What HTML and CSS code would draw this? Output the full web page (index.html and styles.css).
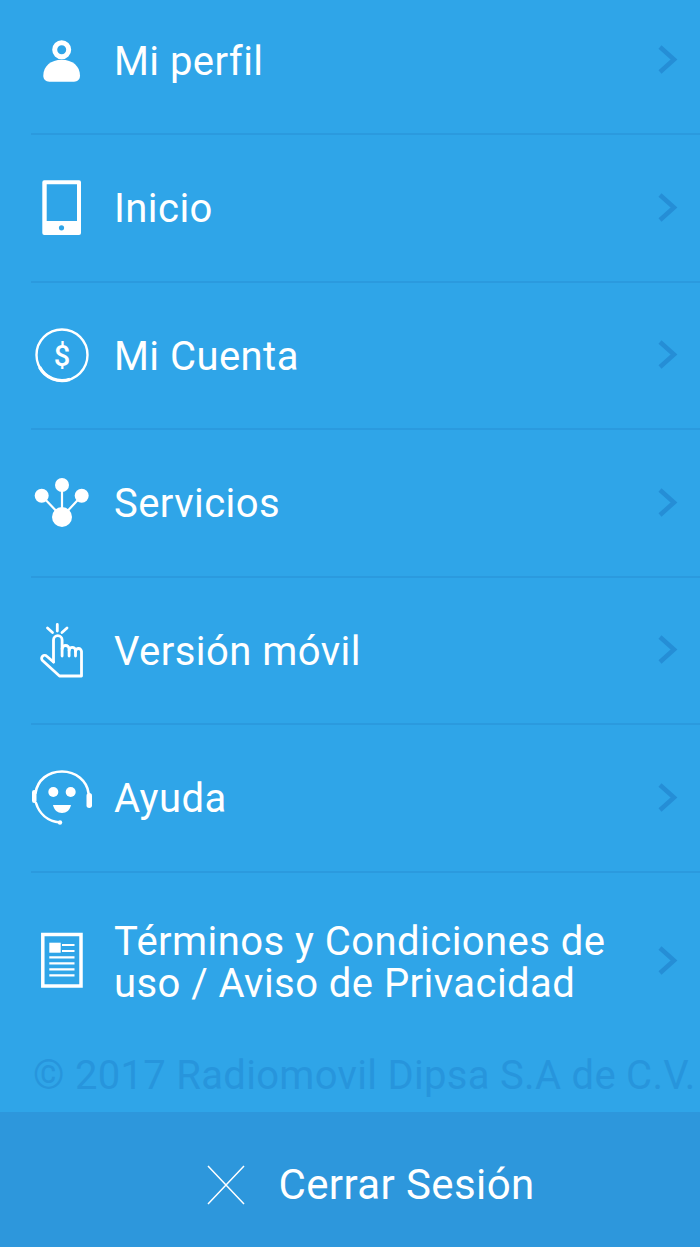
FILE: index.html
```html
<!DOCTYPE html>
<html lang="es">

<head>
  <meta charset="UTF-8">
  <meta name="viewport" content="width=device-width, initial-scale=1.0">
  <title>Menú</title>
  <link rel="stylesheet" href="styles.css">
</head>

<body>
  <nav class="menu">
    <a class="menu-item">
      <svg class="menu-icon" viewBox="30 29 64 64">
        <circle cx="61.7" cy="50.7" r="7" fill="none" stroke="#fff" stroke-width="5"/>
        <path d="M43.3 76.5C43.3 67 51 60.7 61.7 60.7S80 67 80 76.5C80 80.5 77.5 82.7 74 82.7H49.3C45.8 82.7 43.3 80.5 43.3 76.5Z" fill="#fff"/>
      </svg>
      <span class="menu-label">Mi perfil</span>
      <svg class="menu-arrow" viewBox="0 0 24 32"><path d="M3 3L17 15.5L3 28"/></svg>
    </a>
    <a class="menu-item">
      <svg class="menu-icon" viewBox="30 176 64 64">
        <path fill-rule="evenodd" d="M44.3 180.3H79a2 2 0 0 1 2 2V233a2 2 0 0 1-2 2H44.3a2 2 0 0 1-2-2V182.3a2 2 0 0 1 2-2ZM46.7 184.3V221H77V184.3Z" fill="#fff"/>
        <circle cx="61.5" cy="227.8" r="2.6" fill="#2fa5e8"/>
      </svg>
      <span class="menu-label">Inicio</span>
      <svg class="menu-arrow" viewBox="0 0 24 32"><path d="M3 3L17 15.5L3 28"/></svg>
    </a>
    <a class="menu-item">
      <svg class="menu-icon" viewBox="30 323 64 64">
        <circle cx="62" cy="355" r="25.5" fill="none" stroke="#fff" stroke-width="2.4"/>
        <path d="M39.5 367A25.5 25.5 0 0 0 70 379.3" fill="none" stroke="#fff" stroke-width="3.4"/>
        <text class="dollar-sign" x="62" y="366">$</text>
      </svg>
      <span class="menu-label">Mi Cuenta</span>
      <svg class="menu-arrow" viewBox="0 0 24 32"><path d="M3 3L17 15.5L3 28"/></svg>
    </a>
    <a class="menu-item">
      <svg class="menu-icon" viewBox="30 471 64 64">
        <path d="M62 485V517M41.7 495.7L62 517M81.7 495.7L62 517" fill="none" stroke="#fff" stroke-width="2.2"/>
        <circle cx="62" cy="517" r="10" fill="#fff"/>
        <circle cx="62" cy="485" r="7" fill="#fff"/>
        <circle cx="41.7" cy="495.7" r="7" fill="#fff"/>
        <circle cx="81.7" cy="495.7" r="7" fill="#fff"/>
      </svg>
      <span class="menu-label">Servicios</span>
      <svg class="menu-arrow" viewBox="0 0 24 32"><path d="M3 3L17 15.5L3 28"/></svg>
    </a>
    <a class="menu-item">
      <svg class="menu-icon" viewBox="30 618 64 64">
        <g fill="none" stroke="#fff" stroke-width="2.8" stroke-linecap="round" stroke-linejoin="round">
          <path d="M57.3 624.5V631M47.5 628L52.5 632.5M67 628L62 632.5"/>
          <path d="M53.5 662V640a4.3 4.3 0 0 1 8.6 0V656"/>
          <path d="M62.1 649a3.5 3.5 0 0 1 7 0V656"/>
          <path d="M69.1 650.5a3.2 3.2 0 0 1 6.4 0V656"/>
          <path d="M75.5 651.5a3 3 0 0 1 6 0V676H59.5L42.5 660.5a3 3 0 0 1 4.3-4.3L53.5 662"/>
        </g>
      </svg>
      <span class="menu-label">Versión móvil</span>
      <svg class="menu-arrow" viewBox="0 0 24 32"><path d="M3 3L17 15.5L3 28"/></svg>
    </a>
    <a class="menu-item">
      <svg class="menu-icon" viewBox="30 766 64 64">
        <g fill="none" stroke="#fff" stroke-width="2.6" stroke-linecap="round">
          <path d="M35.5 793C37.5 780 48 771.5 62 771.5S87 781 88.5 793"/>
          <path d="M36 803C39 813 47 821 60 822.5"/>
        </g>
        <rect x="32" y="790" width="4.5" height="13" rx="2.2" fill="#fff"/>
        <rect x="86.5" y="793" width="5.5" height="15" rx="2.7" fill="#fff"/>
        <circle cx="60" cy="822.5" r="2.2" fill="#fff"/>
        <circle cx="53.3" cy="792" r="5" fill="#fff"/>
        <circle cx="70.7" cy="792" r="5" fill="#fff"/>
        <path d="M53 805H71C70 810 66.5 813 62 813S54 810 53 805Z" fill="#fff"/>
      </svg>
      <span class="menu-label">Ayuda</span>
      <svg class="menu-arrow" viewBox="0 0 24 32"><path d="M3 3L17 15.5L3 28"/></svg>
    </a>
    <a class="menu-item menu-item-last">
      <svg class="menu-icon" viewBox="30 929 64 64">
        <rect x="42.8" y="934.5" width="38.2" height="51.5" fill="none" stroke="#fff" stroke-width="3.5"/>
        <rect x="49.3" y="942.7" width="11.4" height="10" fill="#fff"/>
        <path d="M62 945H74.5M62 951H74.5M49.3 957.3H74.5M49.3 963.3H74.5M49.3 969.3H74.5M49.3 975.3H74.5" stroke="#fff" stroke-width="2.2"/>
      </svg>
      <span class="menu-label">Términos y Condiciones de uso / Aviso de Privacidad</span>
      <svg class="menu-arrow" viewBox="0 0 24 32"><path d="M3 3L17 15.5L3 28"/></svg>
    </a>
  </nav>

  <p class="copyright">© 2017 Radiomovil Dipsa S.A de C.V.</p>

  <a class="logout">
    <svg class="logout-icon" viewBox="0 0 38 40"><path d="M1 1L37 39M37 1L1 39"/></svg>
    <span>Cerrar Sesión</span>
  </a>
</body>

</html>
```

FILE: styles.css
```css
* {
  margin: 0;
  padding: 0;
  box-sizing: border-box;
}

html,
body {
  height: 1247px;
  overflow: hidden;
}

body {
  font-family: 'Roboto', 'Liberation Sans', sans-serif;
  background: #2fa5e8;
  color: #fff;
  display: flex;
  flex-direction: column;
}

.menu {
  margin-top: -12.5px;
  margin-left: 31px;
}

.menu-item {
  display: flex;
  align-items: center;
  height: 147.5px;
  border-bottom: 2px solid #2b9ade;
}

.menu-item-last {
  height: 177px;
  border-bottom: none;
}

.menu-icon {
  width: 64px;
  height: 64px;
  margin-left: -1px;
  margin-right: 20px;
  flex-shrink: 0;
}

.dollar-sign {
  font-size: 29px;
  font-weight: 500;
  font-family: 'Roboto', sans-serif;
  text-anchor: middle;
  fill: #fff;
}

.menu-label {
  flex: 1;
  font-size: 40px;
  line-height: 42px;
  letter-spacing: 0.45px;
  padding-top: 3px;
  padding-right: 40px;
}

.menu-arrow {
  width: 24px;
  height: 32px;
  margin-right: 19px;
  flex-shrink: 0;
}

.menu-arrow path {
  fill: none;
  stroke: #258ed6;
  stroke-width: 4.5;
}

.copyright {
  margin-top: 3.5px;
  margin-left: 33px;
  font-size: 40px;
  line-height: 46px;
  letter-spacing: 0.3px;
  white-space: nowrap;
  color: #2795dc;
}

.logout {
  margin-top: auto;
  height: 135px;
  padding-top: 10px;
  padding-left: 42px;
  background: #2d97dc;
  display: flex;
  align-items: center;
  justify-content: center;
  gap: 33px;
  font-size: 42px;
  letter-spacing: 0.4px;
}

.logout-icon {
  width: 38px;
  height: 40px;
}

.logout-icon path {
  fill: none;
  stroke: #fff;
  stroke-width: 1.5;
}
```
